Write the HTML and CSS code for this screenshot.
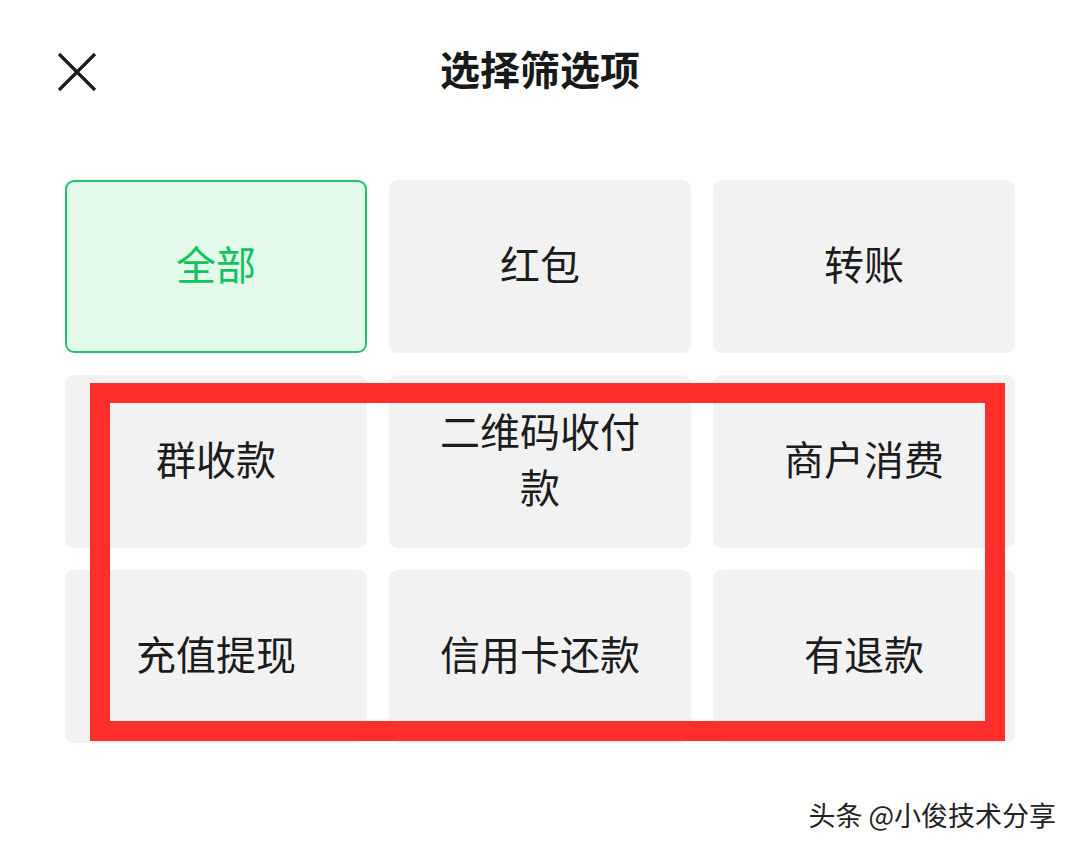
FILE: index.html
```html
<!DOCTYPE html>
<html lang="zh-CN">
<head>
  <meta charset="UTF-8" />
  <meta name="viewport" content="width=device-width, initial-scale=1.0"/>
  <title>选择筛选项</title>
  <link rel="stylesheet" href="styles.css">
</head>
<body>
  <header class="top-bar">
    <button class="close-btn" aria-label="关闭">
      <svg width="40" height="40" viewBox="0 0 40 40">
        <path d="M2 2 L38 38 M38 2 L2 38" stroke="#1a1a1a" stroke-width="3.2" fill="none"/>
      </svg>
    </button>
    <h1>选择筛选项</h1>
    <span></span>
  </header>

  <main class="filters">
    <div class="option active">全部</div>
    <div class="option">红包</div>
    <div class="option">转账</div>
    <div class="option">群收款</div>
    <div class="option">二维码收付款</div>
    <div class="option">商户消费</div>
    <div class="option">充值提现</div>
    <div class="option">信用卡还款</div>
    <div class="option">有退款</div>
  </main>

  <!-- 标注框 -->
  <div class="highlight"></div>
  <div class="watermark">头条 @小俊技术分享</div>
</body>
</html>
```

FILE: styles.css
```css
* {
  box-sizing: border-box;
  font-family: "Noto Sans CJK SC", "Noto Sans", sans-serif;
}
body {
  margin: 0;
  background: #fff;
  color: #191919;
  height: 851px;
  overflow: hidden;
}
.top-bar {
  display: grid;
  grid-template-columns: 1fr auto 1fr;
  align-items: center;
  height: 136px;
  padding: 0 57px;
}
.close-btn {
  justify-self: start;
  width: 40px;
  height: 40px;
  padding: 0;
  margin-top: 8px;
  border: none;
  background: none;
  cursor: pointer;
}
.close-btn svg {
  display: block;
}
.top-bar h1 {
  margin: 0;
  font-size: 40px;
  font-weight: 700;
  line-height: 1;
}
.filters {
  display: grid;
  grid-template-columns: repeat(3, 302px);
  grid-auto-rows: 173px;
  gap: 22px;
  padding: 0 65px;
  margin-top: 44px;
}
.option {
  display: flex;
  align-items: center;
  justify-content: center;
  text-align: center;
  padding: 0 38px 7px;
  background: #f2f2f2;
  border-radius: 9px;
  font-size: 40px;
  line-height: 56px;
  color: #1c1c1c;
}
.option.active {
  background: #e3f9ea;
  border: 2px solid #22c26b;
  color: #12c25e;
}
.highlight {
  position: absolute;
  left: 90px;
  top: 383px;
  width: 915px;
  height: 358px;
  border: 20px solid #fe2f2a;
}
.watermark {
  position: absolute;
  right: 24px;
  top: 795px;
  font-size: 27px;
  color: #222;
  text-shadow: 1px 1px 0 #fff, -1px 0 0 #fff;
}
```
